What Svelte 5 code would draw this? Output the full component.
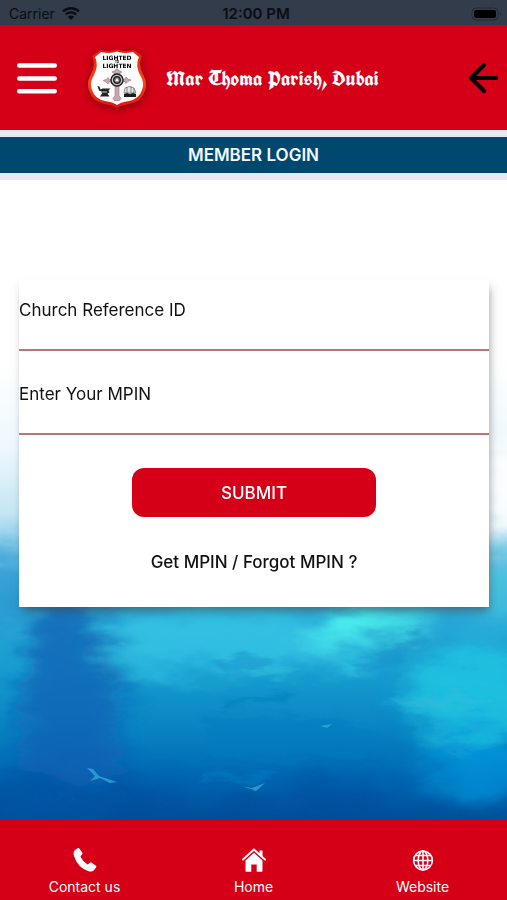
<script>
  let reference = $state('');
  let mpin = $state('');

  const tabs = [
    { id: 'contact', label: 'Contact us' },
    { id: 'home', label: 'Home' },
    { id: 'website', label: 'Website' }
  ];

  function submit(e) {
    e.preventDefault();
  }
</script>

<div class="screen">
  <div class="status">
    <span class="carrier">
      Carrier
      <svg width="20" height="15" viewBox="0 0 20 15" aria-hidden="true">
        <path d="M2 5.5A11.5 11.5 0 0 1 18 5.5M4.8 8.5a7.5 7.5 0 0 1 10.4 0" fill="none" stroke="currentColor" stroke-width="2.4" />
        <path d="M6.8 10.8a4.6 4.6 0 0 1 6.4 0L10 14z" fill="currentColor" />
      </svg>
    </span>
    <span class="time">12:00 PM</span>
    <svg class="battery" width="32" height="14" viewBox="0 0 32 14" aria-hidden="true">
      <rect x="1" y="1" width="26" height="12" rx="4" fill="none" stroke="#222a34" />
      <rect x="3" y="3" width="22" height="8" rx="2" fill="#000" />
      <path d="M29 5q2 2 0 4z" fill="#222a34" />
    </svg>
  </div>

  <header class="header">
    <button class="icon-button" aria-label="Menu">
      <svg width="40" height="32" viewBox="0 0 40 32" fill="none" stroke="#fff" stroke-width="4.4" stroke-linecap="round">
        <path d="M2.2 3.5h35.6M2.2 16.5h35.6M2.2 29.2h35.6" />
      </svg>
    </button>
    <svg class="crest" width="60" height="60" viewBox="0 0 60 60" aria-hidden="true">
      <defs>
        <linearGradient id="crest-edge" x1="0" y1="0" x2="0" y2="1">
          <stop offset="0" stop-color="#e81c10" />
          <stop offset=".55" stop-color="#f4481c" />
          <stop offset="1" stop-color="#e0100e" />
        </linearGradient>
      </defs>
      <path d="M30 1Q35 4.500 47 2L55 8Q51 17 56 26 61 35 58 43 54 54 43 56 34 57 30 60 26 57 17 56 6 54 2 43 -1 35 4 26 9 17 5 8L13 2Q25 4.500 30 1z" fill="url(#crest-edge)" />
      <path d="M30 3.500Q36 6 46 4L52 9Q48 17 53 27 58 35 55 42 52 51 42 53 34 54 30 57 26 54 18 53 8 51 5 42 2 35 7 27 12 17 8 9L14 4Q24 6 30 3.500z" fill="#fff" />
      <text x="30" y="11.500" class="motto">LIGHTED</text>
      <text x="30" y="15.200" class="motto-small">TO</text>
      <text x="30" y="20" class="motto">LIGHTEN</text>
      <g fill="#b9aeb5" stroke="#c65b68" stroke-width=".6">
        <path d="M28 28l-1-3-2-1 2.500-1 2.500-2.500 2.500 2.500 2.500 1-2 1-1 3v4l6-1 1-2 2 2 3 1-3 1.500-2 2-1-2-6-1v15l2 3-1.500 2h-5l-1.500-2 2-3V33l-6 1-1 2-2-2-3-1.500 3-1 2-2 1 2 6 1z" />
      </g>
      <circle cx="30" cy="32" r="6" fill="#c9c5c4" stroke="#1d1d1d" stroke-width="1.400" />
      <circle cx="30" cy="32" r="3.300" fill="#777" stroke="#1d1d1d" stroke-width="1.300" />
      <path d="M30 30l1.800 3.300h-3.600z" fill="#fff" />
      <path d="M10.500 38l2 .5 1 3 2-1h8l-2 2 1 2-2 1 2 3H13l2-3-1-2-2-1z" fill="#222" />
      <path d="M13 44h7" stroke="#fff" stroke-width=".8" />
      <path d="M38 40q4-3 9 0l2 5H37zM40 39v6M44 38v7M47 40v5" fill="#e4e4e4" stroke="#666" stroke-width=".7" />
      <path d="M37 46l3-1 3 1 3-1 3 1v3H37z" fill="#1e1e1e" />
    </svg>
    <h1 class="name">Mar Thoma Parish, Dubai</h1>
    <button class="icon-button" aria-label="Back">
      <svg width="32" height="32" viewBox="0 0 32 32" fill="none" stroke="#000" stroke-width="4.200" stroke-linecap="round" stroke-linejoin="round">
        <path d="M17 3L4 16l13 13M4 16h25" />
      </svg>
    </button>
  </header>

  <h2 class="title">MEMBER LOGIN</h2>

  <main class="content">
    <svg class="sea" viewBox="0 0 507 640" preserveAspectRatio="none" aria-hidden="true">
      <defs>
        <linearGradient id="depth" x1="0" y1="0" x2="0" y2="1">
          <stop offset="0" stop-color="#fff" />
          <stop offset=".28" stop-color="#fff" />
          <stop offset=".42" stop-color="#eef8fd" />
          <stop offset=".52" stop-color="#c4e6f4" />
          <stop offset=".6" stop-color="#6cc2e5" />
          <stop offset=".68" stop-color="#2ba9d8" />
          <stop offset=".76" stop-color="#199fd1" />
          <stop offset=".86" stop-color="#0883c2" />
          <stop offset=".94" stop-color="#0064b0" />
          <stop offset="1" stop-color="#005099" />
        </linearGradient>
        <filter id="paint" x="-20%" y="-20%" width="140%" height="140%">
          <feGaussianBlur stdDeviation="12" result="soft" />
          <feTurbulence type="fractalNoise" baseFrequency=".018 .045" numOctaves="4" seed="8" />
          <feDisplacementMap in="soft" scale="46" xChannelSelector="R" yChannelSelector="G" />
        </filter>
        <filter id="strokes" x="-20%" y="-50%" width="140%" height="200%">
          <feGaussianBlur stdDeviation="2" result="soft" />
          <feTurbulence type="fractalNoise" baseFrequency=".03 .09" numOctaves="3" seed="3" />
          <feDisplacementMap in="soft" scale="24" xChannelSelector="R" yChannelSelector="G" />
        </filter>
      </defs>
      <rect width="507" height="640" fill="url(#depth)" />
      <g filter="url(#paint)">
        <ellipse cx="505" cy="310" rx="34" ry="46" fill="#fff" opacity=".9" />
        <ellipse cx="8" cy="410" rx="34" ry="46" fill="#2392d0" opacity=".65" />
        <ellipse cx="498" cy="410" rx="30" ry="30" fill="#45c3de" opacity=".7" />
        <ellipse cx="225" cy="460" rx="140" ry="34" fill="#35c8e5" opacity=".75" />
        <ellipse cx="372" cy="448" rx="56" ry="24" fill="#4ceeee" />
        <ellipse cx="475" cy="515" rx="70" ry="48" fill="#1cc6e2" opacity=".85" />
        <path d="M28 420h70l22 75-2 150H24l-14-60 14-60z" fill="#0b5fb3" opacity=".75" />
        <ellipse cx="410" cy="462" rx="32" ry="16" fill="#1c93cb" opacity=".8" />
        <ellipse cx="480" cy="585" rx="54" ry="32" fill="#059be0" opacity=".65" />
        <ellipse cx="335" cy="612" rx="42" ry="16" fill="#00509e" opacity=".7" />
        <ellipse cx="60" cy="620" rx="120" ry="24" fill="#00529f" opacity=".7" />
        <ellipse cx="230" cy="642" rx="220" ry="16" fill="#004c98" opacity=".7" />
      </g>
      <g filter="url(#strokes)">
        <path d="M205 535l130 3 50 18-20 22-158-2z" fill="#087dc0" opacity=".5" />
        <path d="M212 480l45-6 20 9-50 12zM350 485l50-25 24-8-10 22-45 24z" fill="#168fca" opacity=".5" />
        <path d="M250 491l60-3-15 8-40 1zM385 520l90-7 20 8-80 10z" fill="#32bddd" opacity=".5" />
        <path d="M225 520l70-8-12 8-58 7z" fill="#087aba" opacity=".5" />
        <path d="M205 595l70-2-15 9-60 2z" fill="#0b80c5" opacity=".5" />
      </g>
      <path d="M87 588l6 1 6 7 18 6-7 1-10-5-10 3 5-5zM241 606l11 2 13-5-9 8-5-2zM320 546l12-2-5 4z" fill="#32aeda" opacity=".75" />
    </svg>

    <form class="card" onsubmit={submit}>
      <div class="field">
        <label for="reference">Church Reference ID</label>
        <input id="reference" type="text" bind:value={reference} />
      </div>
      <div class="field">
        <label for="mpin">Enter Your MPIN</label>
        <input id="mpin" type="password" inputmode="numeric" bind:value={mpin} />
      </div>
      <button class="submit" type="submit">SUBMIT</button>
      <a class="forgot" href="#forgot">Get MPIN / Forgot MPIN ?</a>
    </form>
  </main>

  <nav class="tabs">
    {#each tabs as tab (tab.id)}
      <a class="tab" href="#{tab.id}">
        <svg width="24" height="24" viewBox="0 0 24 24" aria-hidden="true">
          {#if tab.id === 'contact'}
            <path d="M1.500 2.500 4.500.2q1.200-.7 2 .5l2.800 4q.6 1-.3 1.900L7.500 8.200q1.500 4.500 7.300 8.300l2-1.700q.9-.7 1.900 0l4 2.600q1.200.8.3 2l-2.300 3q-1.600 1.800-5.200.8Q4.500 19.500 1 8 0 4.300 1.500 2.500z" fill="#fff" />
          {:else if tab.id === 'home'}
            <path d="M1 11.500 12 1.600l11 9.900" fill="none" stroke="#fff" stroke-width="2" stroke-linecap="round" />
            <path d="M17.500 2.500h3v6l-3-2.600zM3.500 12.500 12 4.800l8.500 7.700V23q0 .8-.8.8h-5V16.500H9.300v7.300h-5q-.8 0-.8-.8z" fill="#fff" />
          {:else}
            <g fill="none" stroke="#fff" stroke-width="1.500">
              <circle cx="12" cy="12.500" r="9.400" />
              <ellipse cx="12" cy="12.500" rx="4.800" ry="9.400" />
              <path d="M12 3v19M2.600 12.500h18.800M4.300 7.500h15.400M4.300 17.500h15.400" />
            </g>
          {/if}
        </svg>
        <span>{tab.label}</span>
      </a>
    {/each}
  </nav>
</div>

<style>
  :global(body) {
    margin: 0;
  }

  .screen {
    display: flex;
    flex-direction: column;
    min-height: 100vh;
    font-family: Inter, "Liberation Sans", sans-serif;
    color: #111;
    background: #fff;
  }

  .status {
    display: grid;
    grid-template-columns: 1fr auto 1fr;
    align-items: center;
    height: 25px;
    padding: 2px 4px 0 9px;
    box-sizing: border-box;
    background: #323c4a;
    color: #0a0d12;
    font-size: 14px;
  }

  .carrier {
    display: flex;
    align-items: center;
    gap: 6px;
  }

  .time {
    font-size: 15px;
    font-weight: 600;
  }

  .battery {
    justify-self: end;
  }

  .header {
    display: flex;
    align-items: center;
    height: 105px;
    padding: 0 8px 0 17px;
    background: #d50017;
  }

  .icon-button {
    display: flex;
    padding: 0;
    border: none;
    background: none;
    cursor: pointer;
  }

  .crest {
    margin-left: 30px;
    filter: drop-shadow(0 2px 4px rgba(80, 0, 0, 0.6));
  }

  .motto {
    font-family: "DejaVu Sans", sans-serif;
    font-size: 6px;
    font-weight: 700;
    text-anchor: middle;
  }

  .motto-small {
    font-size: 3px;
    font-weight: 700;
    text-anchor: middle;
  }

  .name {
    flex: 1;
    margin: 0 0 0 19px;
    font-family: "Old English Text MT", UnifrakturCook, "Liberation Serif", serif;
    font-size: 21px;
    font-weight: 700;
    line-height: 24px;
    color: #fff;
  }

  .title {
    margin: 0;
    border: solid #e8e8f5;
    border-width: 7px 0;
    background: #00486e;
    color: #f4faff;
    font-size: 17px;
    font-weight: 600;
    line-height: 36px;
    text-align: center;
  }

  .content {
    position: relative;
    flex: 1;
    padding: 100px 18px 64px 19px;
  }

  .sea {
    position: absolute;
    inset: 0;
    width: 100%;
    height: 100%;
  }

  .card {
    position: relative;
    display: flex;
    flex-direction: column;
    align-items: center;
    padding: 20px 0 35px;
    background: #fff;
    box-shadow: 2px 6px 9px -2px rgba(60, 60, 60, 0.55);
    font-size: 17px;
    line-height: 20px;
  }

  .field {
    display: flex;
    flex-direction: column;
    align-self: stretch;
    margin-bottom: 33px;
  }

  .field input {
    height: 31px;
    padding: 0;
    box-sizing: border-box;
    border: none;
    border-bottom: 2px solid #bd7475;
    border-radius: 0;
    outline: none;
    background: none;
    font: inherit;
  }

  .submit {
    width: 52%;
    height: 49px;
    border: none;
    border-radius: 12px;
    background: #d50017;
    color: #fff;
    font: inherit;
    font-weight: 500;
    cursor: pointer;
  }

  .forgot {
    margin-top: 35px;
    color: #111;
    font-weight: 500;
    text-decoration: none;
  }

  .tabs {
    display: grid;
    grid-template-columns: repeat(3, 1fr);
    height: 80px;
    background: #d50017;
  }

  .tab {
    display: flex;
    flex-direction: column;
    align-items: center;
    gap: 5px;
    padding-top: 28px;
    color: #fff;
    font-size: 14px;
    line-height: 20px;
    text-decoration: none;
  }
</style>
